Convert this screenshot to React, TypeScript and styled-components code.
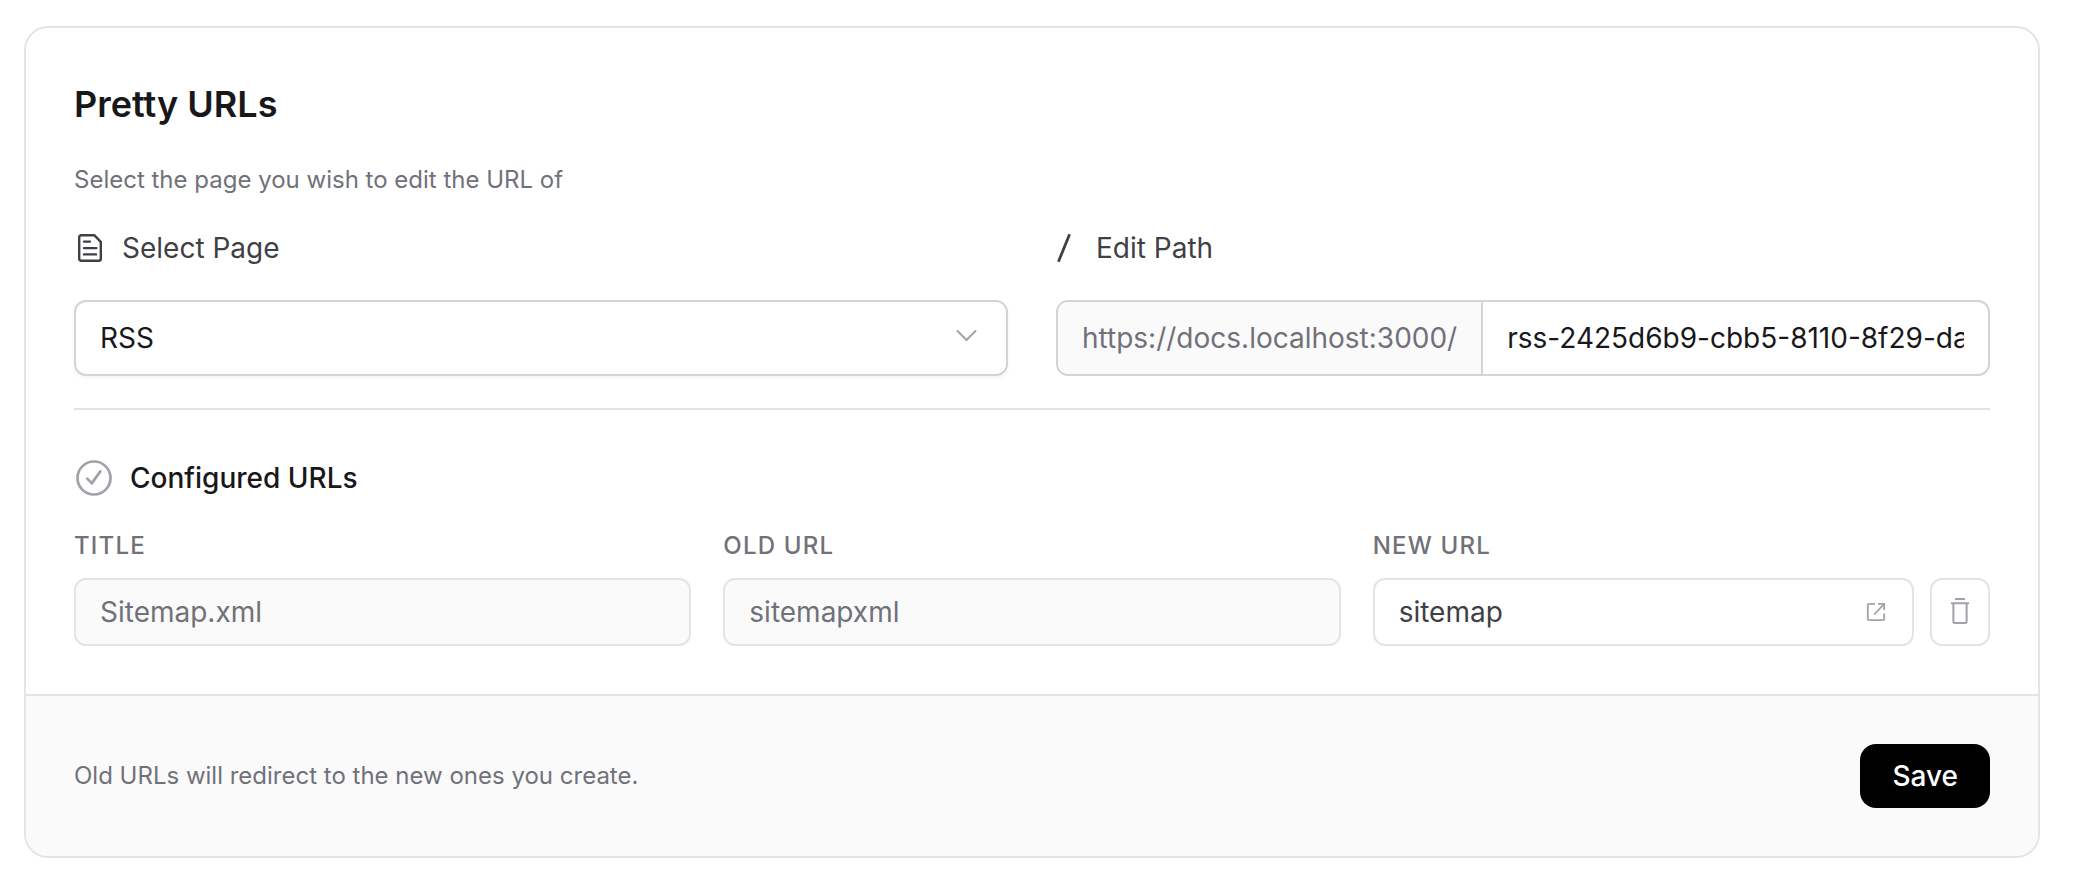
import React from "react";
import styled, { createGlobalStyle } from "styled-components";

const GlobalStyle = createGlobalStyle`
  *, *::before, *::after { box-sizing: border-box; }
  body {
    margin: 0;
    background: #fff;
    color: #18181b;
    font-family: Inter, "Liberation Sans", sans-serif;
    font-size: 28px;
    line-height: 40px;
    -webkit-font-smoothing: antialiased;
  }
  button, input, select { font: inherit; color: inherit; }
`;

const Page = styled.main`
  padding: 26px 52px 20px 24px;
`;

const Card = styled.form`
  border: 2px solid #e4e4e4;
  border-radius: 24px;
  background: #fff;
  overflow: hidden;
`;

const CardBody = styled.div`
  padding: 48px;
`;

const Title = styled.h2`
  margin: 0 0 28px;
  font-size: 36px;
  line-height: 56px;
  font-weight: 600;
`;

const Hint = styled.p`
  margin: 0;
  font-size: 24px;
  color: #71717a;
`;

const EditGrid = styled.div`
  display: grid;
  grid-template-columns: repeat(2, minmax(0, 1fr));
  gap: 48px;
  margin-top: 28px;
  padding-bottom: 32px;
  border-bottom: 2px solid #e4e4e4;
`;

const Field = styled.div<{ $gap: number }>`
  display: flex;
  flex-direction: column;
  gap: ${(p) => p.$gap}px;
  min-width: 0;
`;

const FieldLabel = styled.label`
  display: flex;
  align-items: center;
  gap: 16px;
  color: #3f3f46;
`;

const SelectWrap = styled.div`
  position: relative;
`;

const PageSelect = styled.select`
  display: block;
  width: 100%;
  height: 76px;
  padding: 0 72px 0 24px;
  border: 2px solid #d4d4d8;
  border-radius: 12px;
  background: #fff;
  box-shadow: 0 2px 4px rgba(0, 0, 0, 0.05);
  appearance: none;
`;

const SelectArrow = styled.svg`
  position: absolute;
  top: 20px;
  right: 26px;
  color: #a1a1aa;
  pointer-events: none;
`;

const PathGroup = styled.div`
  display: flex;
  height: 76px;
  border: 2px solid #d4d4d8;
  border-radius: 12px;
  overflow: hidden;
`;

const PathPrefix = styled.span`
  display: flex;
  align-items: center;
  padding: 0 24px;
  border-right: 2px solid #d4d4d8;
  background: #fafafa;
  color: #71717a;
`;

const PathInput = styled.input`
  flex: 1;
  min-width: 0;
  margin: 0 24px;
  padding: 0;
  border: 0;
  outline: 0;
  background: transparent;
`;

const SectionTitle = styled.h3`
  display: flex;
  align-items: center;
  gap: 16px;
  margin: 48px 0 28px;
  font-size: 28px;
  font-weight: 500;
`;

const UrlGrid = styled.div`
  display: grid;
  grid-template-columns: repeat(3, minmax(0, 1fr));
  gap: 32px;
`;

const ColumnLabel = styled.label`
  font-size: 24px;
  font-weight: 500;
  letter-spacing: 0.05em;
  text-transform: uppercase;
  color: #71717a;
`;

const UrlInput = styled.input`
  width: 100%;
  height: 68px;
  padding: 0 24px;
  border: 2px solid #e4e4e4;
  border-radius: 12px;
  background: #fff;
  color: #3f3f46;

  &:disabled {
    background: #fafafa;
    color: #71717a;
  }
`;

const NewUrlRow = styled.div`
  display: flex;
  gap: 16px;
`;

const LinkedInput = styled.div`
  position: relative;
  flex: 1;
  min-width: 0;
`;

const OpenLink = styled.a`
  position: absolute;
  top: 24px;
  right: 28px;
  display: flex;
  color: #a3a3a3;
`;

const DeleteButton = styled.button`
  display: flex;
  align-items: center;
  justify-content: center;
  width: 60px;
  height: 68px;
  padding: 0;
  border: 2px solid #e4e4e4;
  border-radius: 12px;
  background: #fff;
  color: #a1a1aa;
`;

const CardFooter = styled.footer`
  display: flex;
  align-items: center;
  justify-content: space-between;
  padding: 48px;
  border-top: 2px solid #e4e4e4;
  background: #fafafa;
`;

const SaveButton = styled.button`
  height: 64px;
  padding: 0 32px;
  border: 0;
  border-radius: 16px;
  background: #000;
  color: #fff;
  font-weight: 500;
`;

const stroke = {
  fill: "none",
  stroke: "currentColor",
  "aria-hidden": true,
} as const;

const DocumentIcon = () => (
  <svg width="32" height="32" viewBox="0 0 32 32" strokeWidth="2.4" strokeLinejoin="round" strokeLinecap="round" {...stroke}>
    <path d="M7.2 3.2H20.2L26.8 9.8V26.8a2 2 0 0 1-2 2H7.2a2 2 0 0 1-2-2V5.2a2 2 0 0 1 2-2Z" />
    <path d="M10 9.6h6M10 16.1h12.4M10 22.4h12" />
  </svg>
);

const SlashIcon = () => (
  <svg width="24" height="32" viewBox="0 0 24 32" strokeWidth="2.8" {...stroke}>
    <path d="M13.6 2.2 2.4 29.8" />
  </svg>
);

const ChevronIcon = () => (
  <SelectArrow width="32" height="32" viewBox="0 0 32 32" strokeWidth="2" strokeLinecap="round" strokeLinejoin="round" {...stroke}>
    <path d="M7.5 11 16.5 20 25.5 11" />
  </SelectArrow>
);

const CheckIcon = () => (
  <svg width="40" height="40" viewBox="0 0 40 40" strokeWidth="2.7" strokeLinecap="round" strokeLinejoin="round" color="#a1a1aa" {...stroke}>
    <circle cx="20" cy="20" r="16.5" />
    <path d="M13.3 20.6 17.8 25.4 26.3 13.4" />
  </svg>
);

const ExternalIcon = () => (
  <svg width="20" height="20" viewBox="0 0 20 20" strokeWidth="1.8" strokeLinejoin="round" {...stroke}>
    <path d="M9 1.8H3a1.2 1.2 0 0 0-1.2 1.2V17a1.2 1.2 0 0 0 1.2 1.2H17a1.2 1.2 0 0 0 1.2-1.2V11.5" />
    <path d="M12 1.8H18.2V8M18.2 1.8 8.2 12.5" />
  </svg>
);

const TrashIcon = () => (
  <svg width="32" height="32" viewBox="0 0 32 32" strokeWidth="2" strokeLinejoin="round" {...stroke}>
    <path d="M11 3H21M7 7.3H25M9.4 7.3V25.8a1.2 1.2 0 0 0 1.2 1.2H21.4a1.2 1.2 0 0 0 1.2-1.2V7.3" />
  </svg>
);

export default function App() {
  return (
    <>
      <GlobalStyle />
      <Page>
        <Card onSubmit={(e: React.FormEvent) => e.preventDefault()}>
          <CardBody>
            <Title>Pretty URLs</Title>
            <Hint>Select the page you wish to edit the URL of</Hint>
            <EditGrid>
              <Field $gap={32}>
                <FieldLabel htmlFor="page">
                  <DocumentIcon />
                  Select Page
                </FieldLabel>
                <SelectWrap>
                  <PageSelect id="page" defaultValue="rss">
                    <option value="rss">RSS</option>
                  </PageSelect>
                  <ChevronIcon />
                </SelectWrap>
              </Field>
              <Field $gap={32}>
                <FieldLabel htmlFor="path">
                  <SlashIcon />
                  Edit Path
                </FieldLabel>
                <PathGroup>
                  <PathPrefix>https://docs.localhost:3000/</PathPrefix>
                  <PathInput id="path" type="text" defaultValue="rss-2425d6b9-cbb5-8110-8f29-da" />
                </PathGroup>
              </Field>
            </EditGrid>

            <SectionTitle>
              <CheckIcon />
              Configured URLs
            </SectionTitle>
            <UrlGrid>
              <Field $gap={12}>
                <ColumnLabel htmlFor="title">Title</ColumnLabel>
                <UrlInput id="title" type="text" defaultValue="Sitemap.xml" disabled />
              </Field>
              <Field $gap={12}>
                <ColumnLabel htmlFor="old-url">Old URL</ColumnLabel>
                <UrlInput id="old-url" type="text" defaultValue="sitemapxml" disabled />
              </Field>
              <Field $gap={12}>
                <ColumnLabel htmlFor="new-url">New URL</ColumnLabel>
                <NewUrlRow>
                  <LinkedInput>
                    <UrlInput id="new-url" type="text" defaultValue="sitemap" />
                    <OpenLink href="#sitemap" aria-label="Open page">
                      <ExternalIcon />
                    </OpenLink>
                  </LinkedInput>
                  <DeleteButton type="button" aria-label="Delete URL">
                    <TrashIcon />
                  </DeleteButton>
                </NewUrlRow>
              </Field>
            </UrlGrid>
          </CardBody>
          <CardFooter>
            <Hint>Old URLs will redirect to the new ones you create.</Hint>
            <SaveButton type="submit">Save</SaveButton>
          </CardFooter>
        </Card>
      </Page>
    </>
  );
}
